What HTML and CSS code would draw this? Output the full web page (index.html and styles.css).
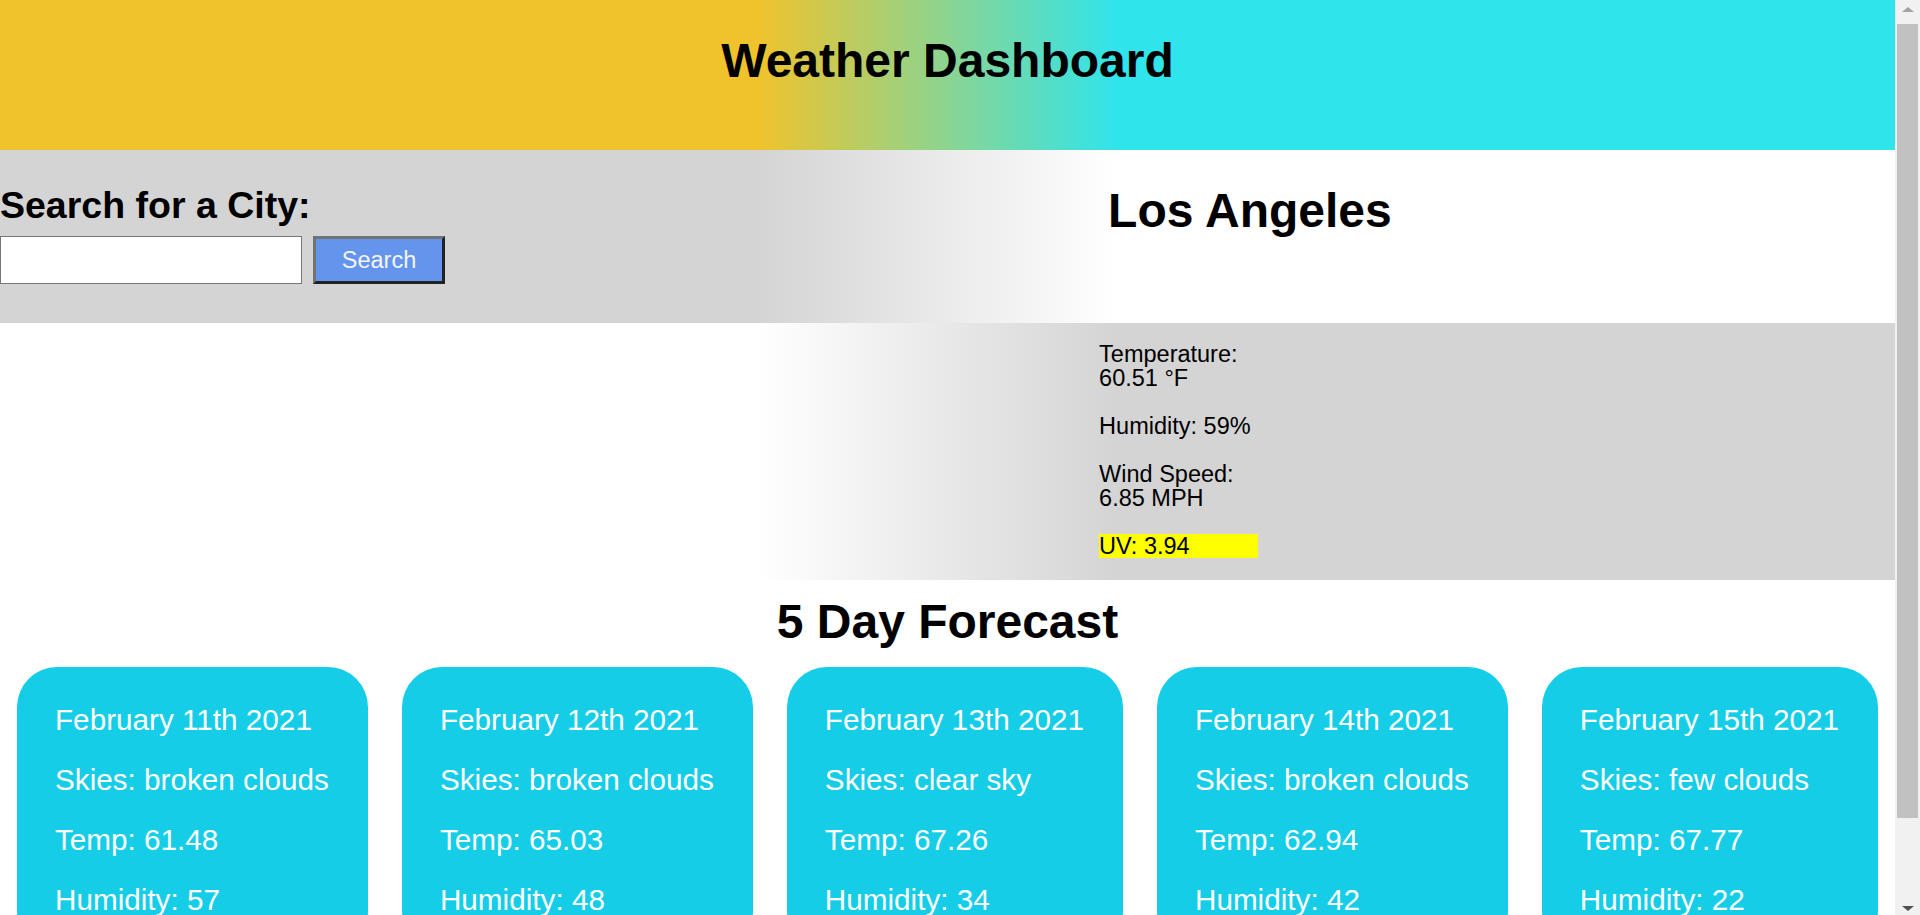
FILE: index.html
```html
<!DOCTYPE html>
<html lang="en">
<head>
<meta charset="utf-8">
<title>Weather Dashboard</title>
<link rel="stylesheet" href="styles.css">
</head>
<body>
<div class="viewport">
  <div class="page">
    <header class="header">
      <h1 class="title">Weather Dashboard</h1>
    </header>

    <section class="row row-search">
      <div class="col-left">
        <h2 class="search-label">Search for a City:</h2>
        <div class="search-form">
          <input class="search-input" type="text" aria-label="City">
          <button class="search-btn" type="button">Search</button>
        </div>
      </div>
      <div class="col-right">
        <h2 class="city-name">Los Angeles</h2>
      </div>
    </section>

    <section class="row row-details">
      <div class="col-left"></div>
      <div class="col-right">
        <div class="details">
          <p class="detail">Temperature: 60.51 °F</p>
          <p class="detail">Humidity: 59%</p>
          <p class="detail">Wind Speed: 6.85 MPH</p>
          <p class="detail uv">UV: 3.94</p>
        </div>
      </div>
    </section>

    <h2 class="forecast-title">5 Day Forecast</h2>

    <section class="cards">
      <div class="card">
        <p>February 11th 2021</p>
        <p>Skies: broken clouds</p>
        <p>Temp: 61.48</p>
        <p>Humidity: 57</p>
      </div>
      <div class="card">
        <p>February 12th 2021</p>
        <p>Skies: broken clouds</p>
        <p>Temp: 65.03</p>
        <p>Humidity: 48</p>
      </div>
      <div class="card">
        <p>February 13th 2021</p>
        <p>Skies: clear sky</p>
        <p>Temp: 67.26</p>
        <p>Humidity: 34</p>
      </div>
      <div class="card">
        <p>February 14th 2021</p>
        <p>Skies: broken clouds</p>
        <p>Temp: 62.94</p>
        <p>Humidity: 42</p>
      </div>
      <div class="card">
        <p>February 15th 2021</p>
        <p>Skies: few clouds</p>
        <p>Temp: 67.77</p>
        <p>Humidity: 22</p>
      </div>
    </section>
  </div>

  <div class="scrollbar" aria-hidden="true">
    <div class="sb-arrow sb-up"></div>
    <div class="sb-track"><div class="sb-thumb"></div></div>
    <div class="sb-arrow sb-down"></div>
  </div>
</div>
</body>
</html>
```

FILE: styles.css
```css
html, body {
  margin: 0;
  padding: 0;
  height: 100%;
  overflow: hidden;
  background: #ffffff;
}

body {
  font-family: "Liberation Sans", Arial, sans-serif;
  color: #000;
}

.viewport {
  display: flex;
  height: 915px;
  width: 100%;
}

.page {
  flex: 1;
  min-width: 0;
  overflow: hidden;
}

/* Header */
.header {
  height: 150px;
  box-sizing: border-box;
  padding-top: 33px;
  background: linear-gradient(to right, #f0c32c 40%, #30e4ec 59%);
  text-align: center;
}

.title {
  margin: 0;
  font-size: 48px;
  font-weight: bold;
  line-height: 55px;
}

/* Rows */
.row {
  display: grid;
  grid-template-columns: 58% 42%;
}

.row-search {
  height: 173px;
  box-sizing: border-box;
  padding-top: 34px;
  background: linear-gradient(to right, #d4d4d4 40%, #ffffff 59%);
}

.search-label {
  margin: 0 0 9px 0;
  font-size: 37.5px;
  line-height: 43px;
  font-weight: bold;
}

.search-form {
  display: flex;
  gap: 11px;
  align-items: flex-start;
}

.search-input {
  width: 302px;
  height: 48px;
  box-sizing: border-box;
  border: 1px solid #767676;
  background: #fff;
  margin: 0;
  padding: 0 4px;
  font-size: 20px;
  font-family: "Liberation Sans", Arial, sans-serif;
}

.search-btn {
  width: 132px;
  height: 48px;
  box-sizing: border-box;
  margin: 0;
  padding: 0;
  background: #6495ed;
  color: #f4f4f4;
  font-family: "Liberation Sans", Arial, sans-serif;
  font-size: 23.5px;
  border-style: solid;
  border-width: 3px;
  border-color: #737373 #222222 #222222 #737373;
}

.city-name {
  margin: -1px 0 0 9px;
  font-size: 48px;
  line-height: 55px;
  font-weight: bold;
}

.row-details {
  padding: 19px 0 22px 0;
  background: linear-gradient(to right, #ffffff 40%, #d4d4d4 59%);
}

.details {
  width: 159px;
}

.detail {
  margin: 0 0 24px 0;
  font-size: 23.5px;
  line-height: 24px;
}

.detail:last-child {
  margin-bottom: 0;
}

.uv {
  background: #ffff00;
}

/* Forecast */
.forecast-title {
  margin: 14px 0 18px 0;
  text-align: center;
  font-size: 48px;
  line-height: 55px;
  font-weight: bold;
}

.cards {
  display: flex;
  justify-content: space-around;
  align-items: flex-start;
}

.card {
  background: #16cde8;
  color: #ffffff;
  border-radius: 40px;
  padding: 8px 39px 6px 38px;
  white-space: nowrap;
}

.card p {
  margin: 30px 0;
  font-size: 29.7px;
  line-height: 30px;
}

/* Fake scrollbar */
.scrollbar {
  width: 25px;
  flex: 0 0 25px;
  display: flex;
  flex-direction: column;
  background: #f1f1f1;
}

.sb-arrow {
  height: 24px;
  flex: 0 0 24px;
  display: flex;
  align-items: center;
  justify-content: center;
}

.sb-up::before {
  content: "";
  border-left: 6px solid transparent;
  border-right: 6px solid transparent;
  border-bottom: 5px solid #a3a3a3;
  margin-top: -6px;
}

.sb-down::before {
  content: "";
  border-left: 6px solid transparent;
  border-right: 6px solid transparent;
  border-top: 5px solid #505050;
  margin-top: 10px;
}

.sb-track {
  flex: 1;
  padding: 0 2px;
}

.sb-thumb {
  height: 794px;
  background: #c1c1c1;
}
```
